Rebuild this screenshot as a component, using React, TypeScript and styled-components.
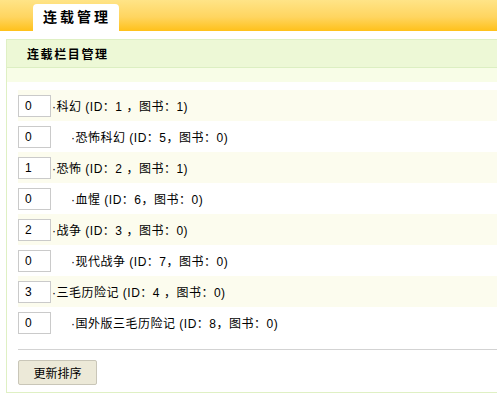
import styled, { createGlobalStyle } from 'styled-components';

const GlobalStyle = createGlobalStyle`
  html, body {
    margin: 0;
    padding: 0;
    background: #fff;
    overflow: hidden;
  }
  body {
    font-family: "Liberation Sans", "Noto Sans CJK SC", sans-serif;
    font-size: 12px;
    color: #000;
  }
`;

const Page = styled.div`
  width: 497px;
  height: 395px;
  overflow: hidden;
`;

const TopBar = styled.div`
  height: 31px;
  display: flex;
  align-items: flex-end;
  padding-left: 33px;
  background: linear-gradient(to bottom, #ffe487 0%, #ffd560 55%, #ffc11a 100%);
`;

const Tab = styled.div`
  width: 76px;
  height: 27px;
  padding-left: 10px;
  background: #fff;
  border-radius: 4px 4px 0 0;
  font-family: "Noto Sans CJK SC", sans-serif;
  font-weight: bold;
  font-size: 14px;
  letter-spacing: 3px;
  line-height: 25px;
`;

const Panel = styled.div`
  margin: 8px 0 0 6px;
  border: 1px solid #dff0c4;
  border-right: none;
  width: 520px;
`;

const PanelHeader = styled.div`
  height: 27px;
  padding-left: 20px;
  background: #edf8d6;
  border-bottom: 1px solid #dcefc2;
  font-family: "Noto Sans CJK SC", sans-serif;
  font-weight: bold;
  font-size: 12px;
  letter-spacing: 1.6px;
  line-height: 27px;
`;

const Strip = styled.div`
  height: 14px;
  background: #f8fde7;
`;

const List = styled.div`
  padding: 8px 0 0 11px;
`;

const Row = styled.div<{ $odd: boolean }>`
  height: 31px;
  display: flex;
  align-items: center;
  background: ${({ $odd }) => ($odd ? '#fcfcee' : 'transparent')};
`;

const OrderInput = styled.input`
  box-sizing: border-box;
  width: 33px;
  height: 22px;
  margin: 0;
  padding: 0 0 0 6px;
  border: 1px solid #cacaca;
  background: #fff;
  font-family: "Liberation Sans", sans-serif;
  font-size: 12px;
  color: #000;
  outline: none;
`;

const Label = styled.span<{ $child: boolean }>`
  padding-left: ${({ $child }) => ($child ? '20px' : '1px')};
  letter-spacing: 0.5px;
  white-space: nowrap;
`;

const Footer = styled.div`
  margin: 11px 0 0 11px;
  padding: 10px 0 7px;
  border-top: 1px solid #d3d3d3;
`;

const Button = styled.button`
  box-sizing: border-box;
  width: 79px;
  height: 25px;
  margin: 0;
  padding: 0;
  background: #ece9d8;
  border: 1px solid #c9c6b8;
  border-radius: 2px;
  font-family: "Noto Sans CJK SC", sans-serif;
  font-size: 12px;
  color: #000;
`;

type Column = { order: number; name: string; id: number; books: number; child: boolean };

const columns: Column[] = [
  { order: 0, name: '科幻', id: 1, books: 1, child: false },
  { order: 0, name: '恐怖科幻', id: 5, books: 0, child: true },
  { order: 1, name: '恐怖', id: 2, books: 1, child: false },
  { order: 0, name: '血惺', id: 6, books: 0, child: true },
  { order: 2, name: '战争', id: 3, books: 0, child: false },
  { order: 0, name: '现代战争', id: 7, books: 0, child: true },
  { order: 3, name: '三毛历险记', id: 4, books: 0, child: false },
  { order: 0, name: '国外版三毛历险记', id: 8, books: 0, child: true },
];

export default function App() {
  return (
    <Page>
      <GlobalStyle />
      <TopBar>
        <Tab>连载管理</Tab>
      </TopBar>
      <Panel>
        <PanelHeader>连载栏目管理</PanelHeader>
        <Strip />
        <List>
          {columns.map((c, i) => (
            <Row key={c.id} $odd={i % 2 === 0}>
              <OrderInput defaultValue={c.order} />
              <Label $child={c.child}>
                ·{c.name} (ID：{c.id}
                {c.child ? '' : ' '}，图书：{c.books})
              </Label>
            </Row>
          ))}
        </List>
        <Footer>
          <Button>更新排序</Button>
        </Footer>
      </Panel>
    </Page>
  );
}
